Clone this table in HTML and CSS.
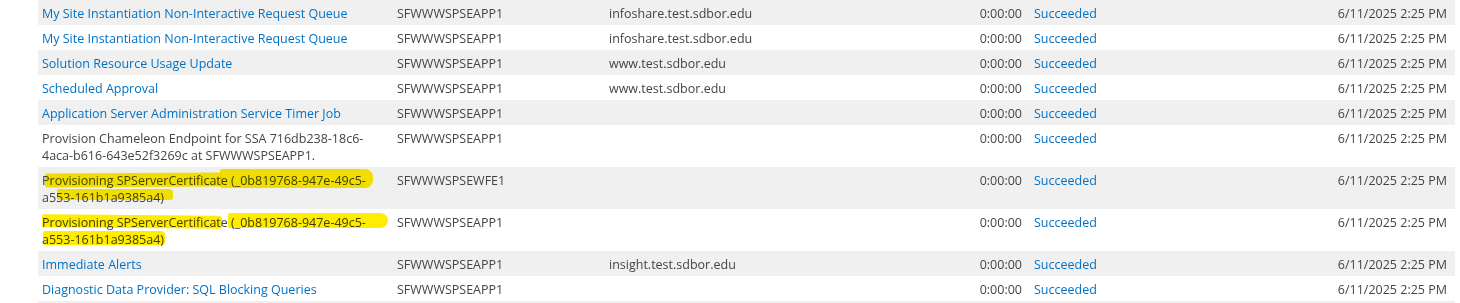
FILE: index.html
```html
<!DOCTYPE html>
<html>
<head>
<meta charset="utf-8">
<title>Timer Job History</title>
<link rel="stylesheet" href="styles.css">
</head>
<body>
<table class="jobs">
  <colgroup>
    <col class="c-name"><col class="c-server"><col class="c-web"><col class="c-dur"><col class="c-status"><col class="c-date">
  </colgroup>
  <tbody>
    <tr>
      <td class="name"><a class="link" href="#">My Site Instantiation Non-Interactive Request Queue</a></td>
      <td>SFWWWSPSEAPP1</td><td>infoshare.test.sdbor.edu</td><td class="dur">0:00:00</td>
      <td class="status"><a class="link" href="#">Succeeded</a></td><td class="date">6/11/2025 2:25 PM</td>
    </tr>
    <tr>
      <td class="name"><a class="link" href="#">My Site Instantiation Non-Interactive Request Queue</a></td>
      <td>SFWWWSPSEAPP1</td><td>infoshare.test.sdbor.edu</td><td class="dur">0:00:00</td>
      <td class="status"><a class="link" href="#">Succeeded</a></td><td class="date">6/11/2025 2:25 PM</td>
    </tr>
    <tr>
      <td class="name"><a class="link" href="#">Solution Resource Usage Update</a></td>
      <td>SFWWWSPSEAPP1</td><td>www.test.sdbor.edu</td><td class="dur">0:00:00</td>
      <td class="status"><a class="link" href="#">Succeeded</a></td><td class="date">6/11/2025 2:25 PM</td>
    </tr>
    <tr>
      <td class="name"><a class="link" href="#">Scheduled Approval</a></td>
      <td>SFWWWSPSEAPP1</td><td>www.test.sdbor.edu</td><td class="dur">0:00:00</td>
      <td class="status"><a class="link" href="#">Succeeded</a></td><td class="date">6/11/2025 2:25 PM</td>
    </tr>
    <tr>
      <td class="name"><a class="link" href="#">Application Server Administration Service Timer Job</a></td>
      <td>SFWWWSPSEAPP1</td><td></td><td class="dur">0:00:00</td>
      <td class="status"><a class="link" href="#">Succeeded</a></td><td class="date">6/11/2025 2:25 PM</td>
    </tr>
    <tr>
      <td class="name">Provision Chameleon Endpoint for SSA 716db238-18c6-<br>4aca-b616-643e52f3269c at SFWWWSPSEAPP1.</td>
      <td>SFWWWSPSEAPP1</td><td></td><td class="dur">0:00:00</td>
      <td class="status"><a class="link" href="#">Succeeded</a></td><td class="date">6/11/2025 2:25 PM</td>
    </tr>
    <tr>
      <td class="name">
        <div class="marked">
          <span class="hl h7a"></span><span class="hl h7b"></span><span class="hl h7c"></span>
          Provisioning SPServerCertificate (_0b819768-947e-49c5-<br>a553-161b1a9385a4)
        </div>
      </td>
      <td>SFWWWSPSEWFE1</td><td></td><td class="dur">0:00:00</td>
      <td class="status"><a class="link" href="#">Succeeded</a></td><td class="date">6/11/2025 2:25 PM</td>
    </tr>
    <tr>
      <td class="name">
        <div class="marked">
          <span class="hl h8a"></span><span class="hl h8b"></span><span class="hl h8c"></span>
          Provisioning SPServerCertificate (_0b819768-947e-49c5-<br>a553-161b1a9385a4)
        </div>
      </td>
      <td>SFWWWSPSEAPP1</td><td></td><td class="dur">0:00:00</td>
      <td class="status"><a class="link" href="#">Succeeded</a></td><td class="date">6/11/2025 2:25 PM</td>
    </tr>
    <tr>
      <td class="name"><a class="link" href="#">Immediate Alerts</a></td>
      <td>SFWWWSPSEAPP1</td><td>insight.test.sdbor.edu</td><td class="dur">0:00:00</td>
      <td class="status"><a class="link" href="#">Succeeded</a></td><td class="date">6/11/2025 2:25 PM</td>
    </tr>
    <tr>
      <td class="name"><a class="link" href="#">Diagnostic Data Provider: SQL Blocking Queries</a></td>
      <td>SFWWWSPSEAPP1</td><td></td><td class="dur">0:00:00</td>
      <td class="status"><a class="link" href="#">Succeeded</a></td><td class="date">6/11/2025 2:25 PM</td>
    </tr>
    <tr class="stub">
      <td></td><td></td><td></td><td></td><td></td><td></td>
    </tr>
  </tbody>
</table>
</body>
</html>
```
FILE: styles.css
```css
html, body {
  margin: 0;
  padding: 0;
  background: #ffffff;
}

body {
  font-family: "Open Sans", "Noto Sans", sans-serif;
  font-size: 12.5px;
  line-height: 17px;
  color: #444444;
}

.jobs {
  margin-left: 38px;
  width: 1417px;
  table-layout: fixed;
  border-collapse: collapse;
  border-spacing: 0;
}

.c-name { width: 355px; }
.c-server { width: 212px; }
.c-web { width: 325px; }
.c-dur { width: 100px; }
.c-status { width: 170px; }
.c-date { width: 255px; }

.jobs td {
  padding: 5px 6px 3px 4px;
  vertical-align: top;
  white-space: nowrap;
  text-align: left;
}

.jobs td.name {
  white-space: normal;
}

.jobs tr:nth-child(odd) td {
  background: #f0f0f0;
}

.jobs tr.stub td {
  height: 17px;
}

.jobs td.dur {
  text-align: right;
  padding-right: 8px;
}

.jobs td.date {
  text-align: right;
  padding-right: 8px;
}

.link {
  color: #0072c6;
  text-decoration: none;
}

.marked {
  position: relative;
}

.hl {
  position: absolute;
  background: #ffec00;
  mix-blend-mode: multiply;
  border-radius: 2px 4px 3px 2px;
}

.h7a { left: 3px;   top: 1px;  width: 177px; height: 14px; transform: rotate(-0.4deg); }
.h7b { left: 178px; top: -3px; width: 153px; height: 19px; border-radius: 2px 8px 8px 2px; }
.h7c { left: 15px;  top: 17px; width: 116px; height: 11px; }

.h8a { left: 0px;   top: 1px;  width: 180px; height: 13px; transform: rotate(0.5deg); }
.h8b { left: 186px; top: -1px; width: 160px; height: 15px; border-radius: 2px 8px 8px 2px; }
.h8c { left: 1px;   top: 17px; width: 122px; height: 14px; }
```
